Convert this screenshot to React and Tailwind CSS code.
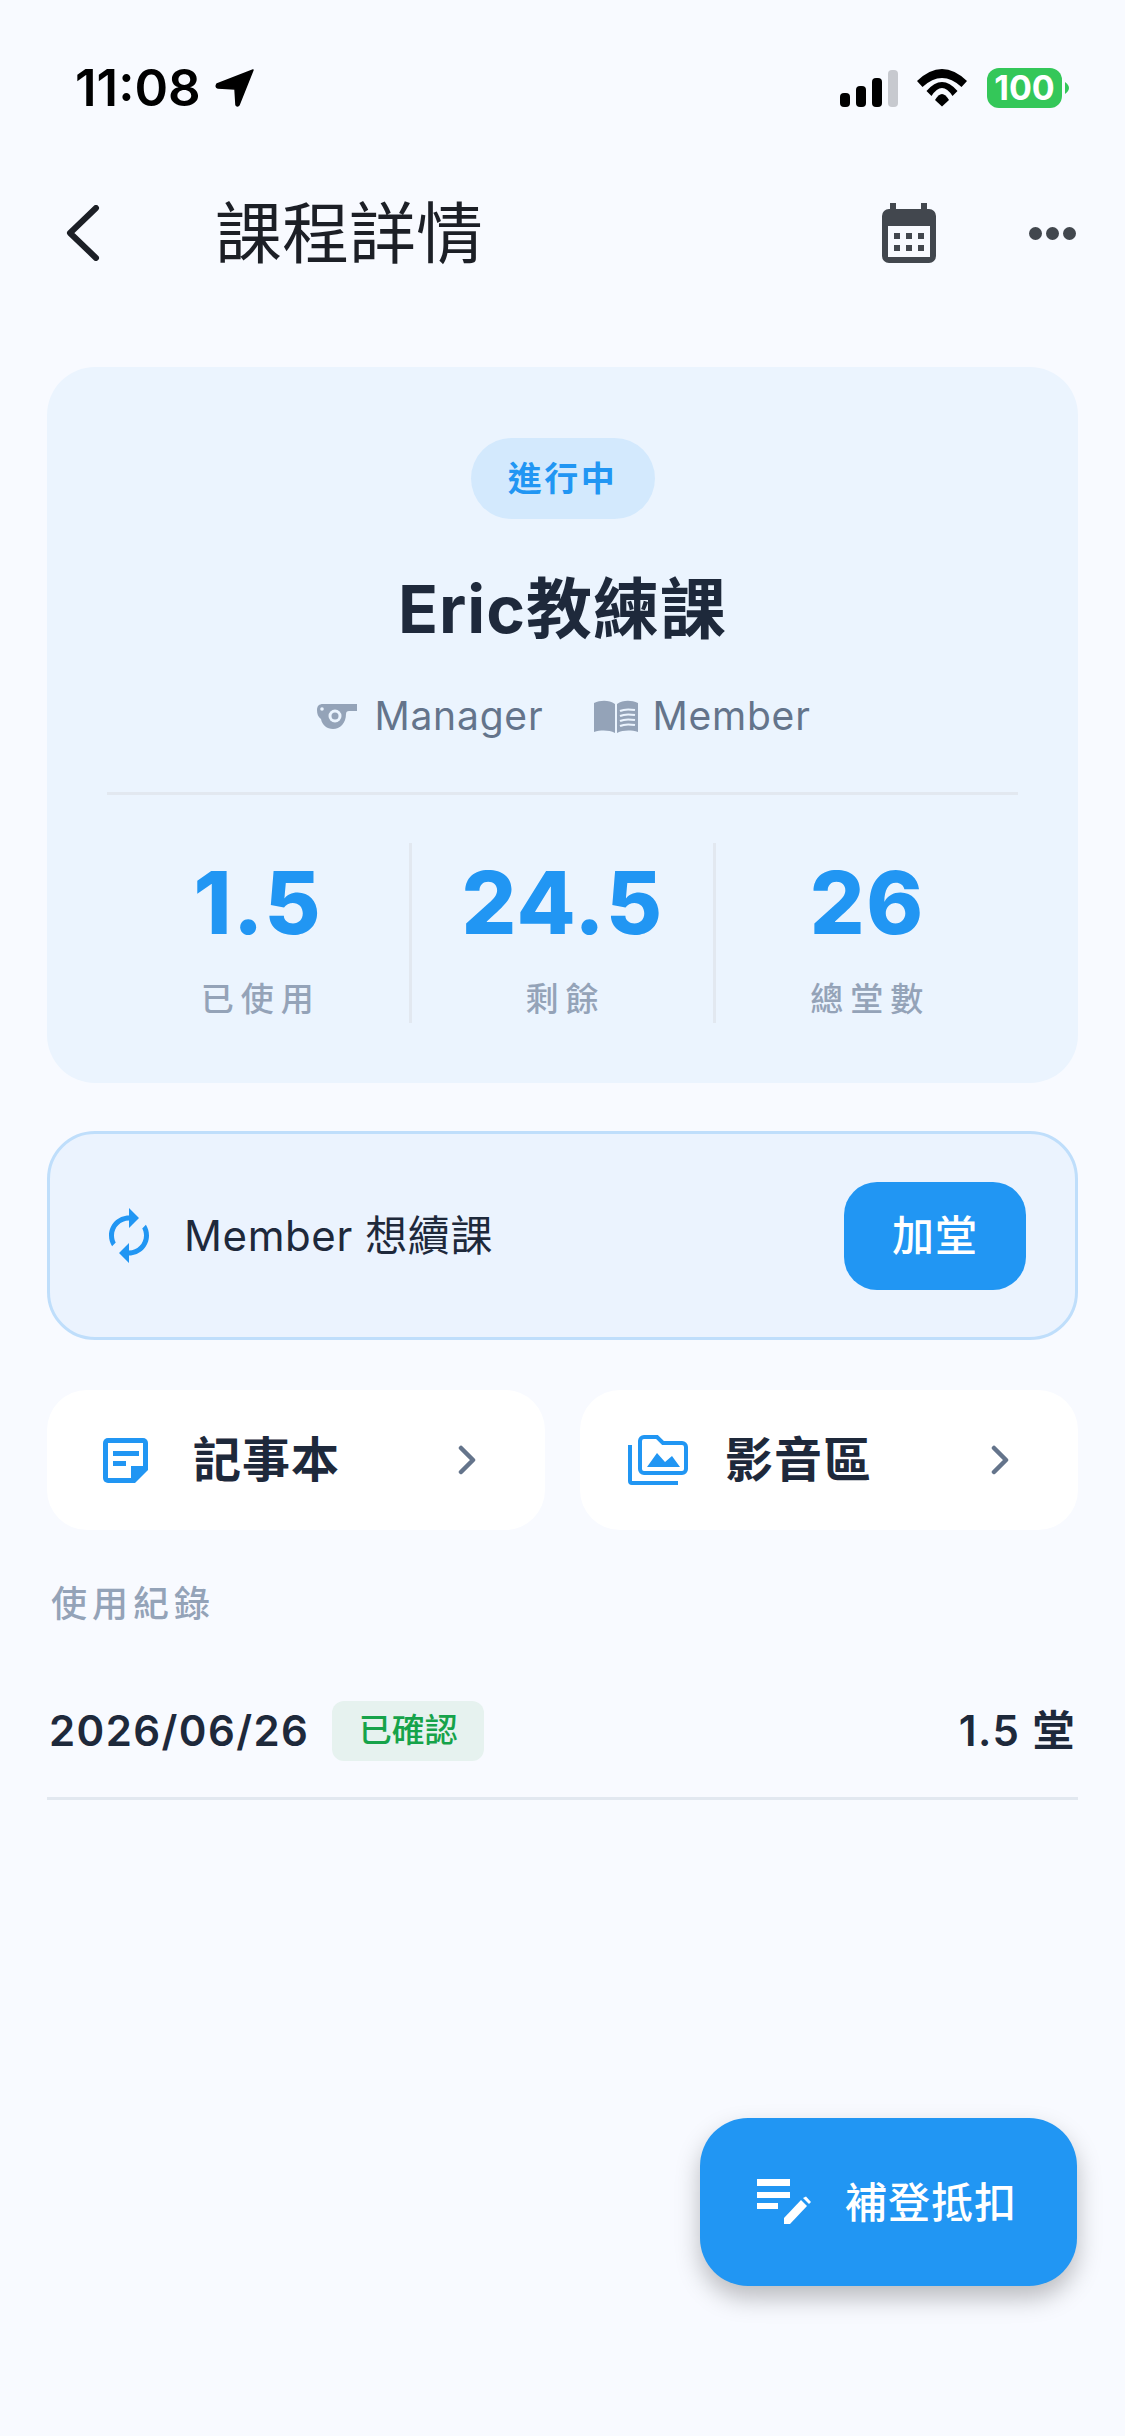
import React from "react";

const FONT = "font-['Inter','Noto_Sans_CJK_TC',sans-serif]";

const StatusBar = () => (
  <div className="flex h-[136px] items-center justify-between pl-[75px] pr-[56px] pt-[40px]">
    <div className="flex items-center gap-[14px]">
      <span className="text-[51px] font-semibold leading-[60px] text-black">11:08</span>
      <svg width="40" height="38" viewBox="0 0 40 38">
        <path d="M38 1 L2 15 Q0 18 3 19 L20 20 L21 36 Q22 38 24 36 Z" fill="#000" stroke="#000" strokeWidth="1.5" strokeLinejoin="round" />
      </svg>
    </div>
    <div className="flex items-center">
      <svg width="58" height="37" viewBox="0 0 58 37">
        <rect x="0" y="23" width="10" height="14" rx="4" fill="#000" />
        <rect x="16" y="16" width="10" height="21" rx="4" fill="#000" />
        <rect x="32" y="8" width="10" height="29" rx="4" fill="#000" />
        <rect x="48" y="0" width="10" height="37" rx="4" fill="#c7c9cf" />
      </svg>
      <svg className="ml-[19px]" width="50" height="38" viewBox="0 0 50 38">
        <path d="M0 12 Q25 -12 50 12 L44.5 18 Q25 0 5.5 18 Z" fill="#000" />
        <path d="M9.5 22 Q25 4 40.5 22 L35.5 27 Q25 11 14.5 27 Z" fill="#000" />
        <path d="M18 31 Q25 19 32 31 L25 37.5 Z" fill="#000" />
      </svg>
      <div className="ml-[20px] flex h-[40px] w-[75px] items-center justify-center rounded-[12px] bg-[#34c759] text-[34px] font-bold leading-none text-white">100</div>
      <svg className="ml-[3px]" width="4" height="12" viewBox="0 0 4 12">
        <path d="M0 0 Q4 3 4 6 Q4 9 0 12 Z" fill="#34c759" />
      </svg>
    </div>
  </div>
);

const Header = () => (
  <div className="mt-[27px] flex h-[140px] items-center pl-[66px] pr-[49px]">
    <svg width="34" height="56" viewBox="0 0 34 56" fill="none">
      <path d="M30 3 L4 28 L30 53" stroke="#1c1f26" strokeWidth="6" strokeLinecap="round" strokeLinejoin="round" />
    </svg>
    <h1 className="ml-[115px] flex-1 text-[67px] font-normal leading-none text-[#1c1f26]">課程詳情</h1>
    <svg width="54" height="60" viewBox="0 0 54 60">
      <path fill="#42474e" d="M8 0h6v6h25V0h6v6h2a7 7 0 0 1 7 7v40a7 7 0 0 1-7 7H7a7 7 0 0 1-7-7V13a7 7 0 0 1 7-7h1z" />
      <rect x="6" y="23" width="42" height="31" fill="#f8faff" />
      <g fill="#42474e">
        <rect x="12" y="30" width="6" height="6" /><rect x="24" y="30" width="6" height="6" /><rect x="36" y="30" width="6" height="6" />
        <rect x="12" y="42" width="6" height="6" /><rect x="24" y="42" width="6" height="6" /><rect x="36" y="42" width="6" height="6" />
      </g>
    </svg>
    <div className="ml-[93px] flex gap-[4px]">
      <span className="h-[13px] w-[13px] rounded-full bg-[#42474e]" />
      <span className="h-[13px] w-[13px] rounded-full bg-[#42474e]" />
      <span className="h-[13px] w-[13px] rounded-full bg-[#42474e]" />
    </div>
  </div>
);

const Whistle = () => (
  <svg width="40" height="26" viewBox="0 0 40 26">
    <path fill="#94a3b8" d="M6 1h34v7h-8c-2 0-3 1-3 3 0 9-6 15-13 15-6 0-11-4-12-10C1 14 0 11 0 7c0-4 2-6 6-6z" />
    <circle cx="18" cy="13" r="6.5" fill="#ebf4fe" />
    <circle cx="18" cy="13" r="3.5" fill="#94a3b8" />
    <circle cx="5" cy="6" r="1.8" fill="#ebf4fe" />
  </svg>
);

const Book = () => (
  <svg width="44" height="33" viewBox="0 0 44 33">
    <path fill="#94a3b8" d="M0 3c7-3 15-3 21 1v29c-6-3-14-3-21-1z" />
    <path fill="#94a3b8" d="M23 4c6-4 14-4 21-1v29c-7-2-15-2-21 1z" />
    <path d="M26 11c4-2 9-2 15-1M26 16c4-2 9-2 15-1M26 21c4-2 9-2 15-1M26 26c4-2 9-2 15-1" fill="none" stroke="#ebf4fe" strokeWidth="2" />
  </svg>
);

const Stat = ({ value, label, border }) => (
  <div className={`flex flex-1 flex-col items-center ${border ? "border-l-[3px] border-[#e2e8f0]" : ""}`}>
    <div className="mt-[18px] text-[86px] font-extrabold leading-[84px] tracking-[1.5px] text-[#2196f3]">{value}</div>
    <div className="mt-[32px] pl-[6px] text-[33px] font-medium leading-[44px] tracking-[7px] text-[#94a3b8]">{label}</div>
  </div>
);

const SummaryCard = () => (
  <div className="mx-[47px] mt-[64px] flex h-[716px] flex-col items-center rounded-[48px] bg-[#ebf4fe] px-[60px] pt-[71px]">
    <div className="flex h-[81px] w-[184px] items-center justify-center rounded-full bg-[#d3e9fd] text-[34px] font-semibold tracking-[2.5px] text-[#2196f3]">進行中</div>
    <div className="mt-[50px] text-[66px] font-bold leading-[80px] tracking-[1px] text-[#1e293b]">Eric教練課</div>
    <div className="mt-[42px] flex h-[50px] items-center pl-[3px] text-[39px] tracking-[0.8px] text-[#64748b]">
      <Whistle />
      <span className="ml-[17px]">Manager</span>
      <span className="ml-[51px]"><Book /></span>
      <span className="ml-[14px]">Member</span>
    </div>
    <div className="mt-[51px] h-[3px] w-full bg-[#e2e8f0]" />
    <div className="mt-[48px] flex h-[180px] w-full">
      <Stat value="1.5" label="已使用" />
      <Stat value="24.5" label="剩餘" border />
      <Stat value="26" label="總堂數" border />
    </div>
  </div>
);

const RenewCard = () => (
  <div className="mx-[47px] mt-[48px] flex h-[209px] items-center rounded-[48px] border-[3px] border-[#bfdefb] bg-[#ebf3fe] pl-[59px] pr-[49px]">
    <svg width="40" height="55" viewBox="4 1 16 22" fill="#2196f3">
      <path d="M12 4V1l4 4-4 4V6c-3.31 0-6 2.69-6 6 0 1.01.25 1.97.7 2.8l-1.46 1.46C4.46 15.03 4 13.57 4 12c0-4.42 3.58-8 8-8z" />
      <path d="M12 18c3.31 0 6-2.69 6-6 0-1.01-.25-1.97-.7-2.8l1.46-1.46C19.54 8.97 20 10.43 20 12c0 4.42-3.58 8-8 8v3l-4-4 4-4z" />
    </svg>
    <span className="ml-[35px] flex-1 text-[42px] tracking-[0.6px] text-[#1e293b]">Member 想續課</span>
    <div className="flex h-[108px] w-[182px] items-center justify-center rounded-[33px] bg-[#2196f3] text-[42px] font-medium tracking-[1px] text-white">加堂</div>
  </div>
);

const NavCard = ({ icon, label, iconGap, pad }) => (
  <div className={`flex h-[140px] items-center rounded-[40px] bg-white ${pad}`}>
    {icon}
    <span className={`${iconGap} flex-1 text-[48px] font-bold tracking-[1px] text-[#1e293b]`}>{label}</span>
    <svg width="20" height="30" viewBox="0 0 20 30" fill="none">
      <path d="M4 3 L16 15 L4 27" stroke="#64748b" strokeWidth="4.5" strokeLinejoin="round" strokeLinecap="round" />
    </svg>
  </div>
);

const NoteIcon = () => (
  <svg width="45" height="45" viewBox="0 0 45 45">
    <path fill="#2196f3" d="M5 0h35a5 5 0 0 1 5 5v27L32 45H5a5 5 0 0 1-5-5V5a5 5 0 0 1 5-5z" />
    <path fill="#fff" d="M5 5h35v23H28v12H5z" />
    <rect x="10" y="13" width="26" height="5" fill="#2196f3" />
    <rect x="10" y="23" width="13" height="5" fill="#2196f3" />
  </svg>
);

const FolderIcon = () => (
  <svg width="60" height="50" viewBox="0 0 60 50" fill="none">
    <path stroke="#2196f3" strokeWidth="4" d="M2 10v36a2 2 0 0 0 2 2h46" />
    <path stroke="#2196f3" strokeWidth="4" d="M12 6a4 4 0 0 1 4-4h13l6 6h19a4 4 0 0 1 4 4v22a4 4 0 0 1-4 4H16a4 4 0 0 1-4-4z" />
    <path fill="#2196f3" d="M19 32 L29 18 L37 27 L44 21 L52 32z" />
  </svg>
);

const UsageRecords = () => (
  <div className="mx-[47px] mt-[52px]">
    <div className="pl-[4px] text-[36px] font-medium leading-[44px] tracking-[5px] text-[#94a3b8]">使用紀錄</div>
    <div className="mt-[75px] flex h-[99px] items-start border-b-[3px] border-[#e2e8f0] pl-[2px]">
      <span className="text-[42px] font-semibold leading-[60px] tracking-[1.4px] text-[#1e293b]">2026/06/26</span>
      <span className="ml-[23px] flex h-[60px] w-[152px] items-center justify-center rounded-[12px] bg-[#e6f2ef] text-[33px] font-medium text-[#16a34a]">已確認</span>
      <span className="ml-auto pr-[2px] text-[42px] font-semibold leading-[60px] tracking-[1.5px] text-[#1e293b]">1.5 堂</span>
    </div>
  </div>
);

const Fab = () => (
  <div className="absolute left-[700px] top-[2118px] flex h-[168px] w-[377px] items-center rounded-[48px] bg-[#2196f3] pl-[57px] shadow-[0_12px_24px_rgba(0,0,0,0.25)]">
    <svg width="55" height="46" viewBox="0 0 55 46" fill="#fff">
      <rect x="0" y="0" width="33" height="7" />
      <rect x="0" y="13" width="33" height="6" />
      <rect x="0" y="24" width="21" height="6" />
      <path d="M27 39 L44 21 L50 27 L33 45 H27z" />
      <path d="M46 19 L49 17.5 L54 23 L52 25z" />
    </svg>
    <span className="ml-[33px] text-[42px] font-medium tracking-[1px] text-white">補登抵扣</span>
  </div>
);

export default function App() {
  return (
    <div className={`relative min-h-[2436px] overflow-hidden bg-[#f8faff] ${FONT}`}>
      <StatusBar />
      <Header />
      <SummaryCard />
      <RenewCard />
      <div className="mx-[47px] mt-[50px] grid grid-cols-2 gap-[35px]">
        <NavCard icon={<NoteIcon />} label="記事本" iconGap="ml-[45px]" pad="pl-[56px] pr-[68px]" />
        <NavCard icon={<FolderIcon />} label="影音區" iconGap="ml-[37px]" pad="pl-[48px] pr-[68px]" />
      </div>
      <UsageRecords />
      <Fab />
    </div>
  );
}
